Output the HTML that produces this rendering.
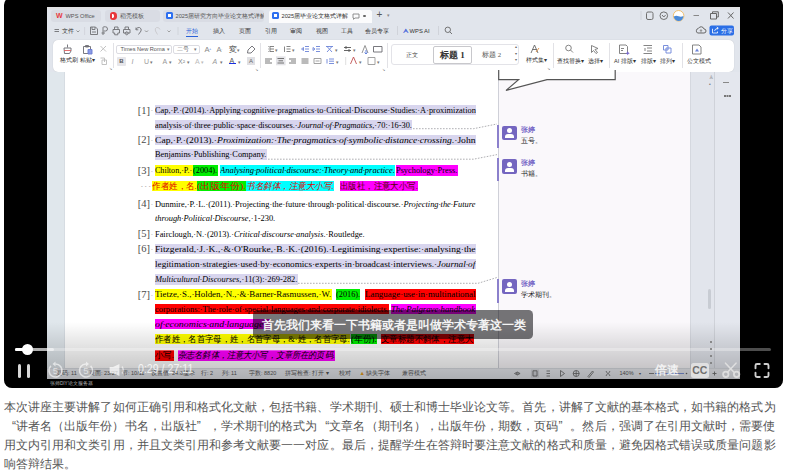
<!DOCTYPE html>
<html><head><meta charset="utf-8">
<style>
*{margin:0;padding:0;box-sizing:border-box}
html,body{width:787px;height:473px;overflow:hidden;background:#fff;font-family:"Liberation Sans",sans-serif}
.a{position:absolute}
#player{left:3.5px;top:-3px;width:779.5px;height:390.5px;background:#000;border-radius:8px;overflow:hidden}
#win{left:47px;top:6.5px;width:693px;height:371.5px;background:#e1e5ec;overflow:hidden}
.tab{height:12px;top:9.5px;border-radius:3px;background:#d9dce4;font-size:5.7px;line-height:12px;color:#555;white-space:nowrap;overflow:hidden}
.menu{top:26.5px;font-size:5.8px;line-height:9px;color:#333;white-space:nowrap}
#ribbon{left:53px;top:39.5px;width:681px;height:32px;background:#fff;border-radius:5px;box-shadow:0 0 1px rgba(0,0,0,.2)}
.rl{position:absolute;font-size:5.5px;color:#333;white-space:nowrap;line-height:7px}
.ri{position:absolute;font-size:8px;color:#555;white-space:nowrap;line-height:9px}
.sep{position:absolute;width:1px;background:#e2e2e6}
.doc{font-family:"Liberation Serif",serif;color:#111;white-space:nowrap;line-height:10.4px;height:10.4px}
.s{display:inline-block;height:10.4px;line-height:10.4px;overflow:hidden;vertical-align:top;font-weight:normal}
.f{display:inline-block;transform-origin:0 50%}
.lav{background:#d8d5ee}
.yel{background:#ffff00}
.grn{background:#00ee00}
.cyn{background:#00ffff}
.mag{background:#ff00ff}
.red{background:#ff0000}
.num{left:137.8px;font-family:"Liberation Serif",serif;font-size:10.5px;color:#4a4a4a;line-height:11px;white-space:nowrap}
.cap{left:4px;width:785px;font-size:12px;line-height:19px;height:19px;color:#555;letter-spacing:.056px;white-space:nowrap}
.q{display:inline-block;width:12px}
.cm-bar{position:absolute;left:497px;width:2px;background:#8b80cc}
.cm-av{position:absolute;left:502px;width:15px;height:14.5px;background:#7466c0;border-radius:2px;overflow:hidden}
.cm-av:before{content:"";position:absolute;left:5px;top:2.5px;width:5px;height:5px;border-radius:50%;background:#fff}
.cm-av:after{content:"";position:absolute;left:3px;top:8.5px;width:9px;height:4px;border-radius:3px 3px 0 0;background:#fff}
.cm-n{position:absolute;left:521px;font-size:7.2px;font-weight:bold;line-height:8px;color:#7a6cc8;white-space:nowrap}
.cm-t{position:absolute;left:521px;font-size:7px;line-height:8px;color:#222;white-space:nowrap}
.st{top:369px;font-size:5.5px;line-height:9px;color:#555;white-space:nowrap}

</style></head><body>
<div id="player" class="a"></div>
<div id="win" class="a"></div>
<div class="a" style="left:47px;top:6.5px;width:693px;height:2.5px;background:#e3e3e5"></div>

<!-- tabs -->
<div class="a tab" style="left:50.5px;width:50.5px;padding-left:15px"><span style="color:#e8383d;font-weight:bold;position:absolute;left:5.5px;top:.5px;font-size:7px">W</span>WPS Office</div>
<div class="a tab" style="left:104.5px;width:55px;padding-left:15px"><span style="position:absolute;left:5px;top:2.5px;width:7px;height:7.5px;border-radius:3px 50% 50% 3px;background:#e8383d"></span><span style="position:absolute;left:7px;top:4.5px;width:2.5px;height:3.5px;border-radius:0 50% 50% 0;background:#fff"></span>稻壳模板</div>
<div class="a tab" style="left:162.5px;width:101.5px;padding-left:13px"><span style="position:absolute;left:3.5px;top:2.5px;width:7px;height:7px;border-radius:1.5px;background:#2d6ff0"></span><span style="position:absolute;left:5.5px;top:4.5px;width:3px;height:2.5px;background:#fff"></span>2025届研究方向毕业论文格式详解</div>
<div class="a tab" style="left:268.5px;width:103.5px;height:13px;padding-left:13px;background:#fbfbfc;color:#333;border-radius:3px 3px 0 0"><span style="position:absolute;left:3.5px;top:2.5px;width:7px;height:7px;border-radius:1.5px;background:#2d6ff0"></span><span style="position:absolute;left:5.5px;top:4.5px;width:3px;height:2.5px;background:#fff"></span>2025届毕业论文格式详解（<span style="position:absolute;left:81px;top:0;width:22px;height:12px;background:#fbfbfc"></span><svg style="position:absolute;left:83.5px;top:3px" width="8" height="7"><path d="M1 1 H7 V5 H3 L1.5 6.3 V5 H1Z" fill="none" stroke="#777" stroke-width=".8"/></svg><span style="position:absolute;left:94.5px;top:5px;width:2.5px;height:2.5px;border-radius:50%;background:#666"></span></div>
<div class="a" style="left:376.5px;top:9px;font-size:10px;line-height:12px;color:#555">+</div><div class="a" style="left:386.5px;top:11px;font-size:5px;line-height:9px;color:#888">▾</div>

<!-- window controls -->
<svg class="a" style="left:636px;top:7px" width="104" height="33" viewBox="636 7 104 33">
<path d="M641 11 V20" stroke="#cfd2da" stroke-width="1"/>
<g fill="none" stroke="#707070" stroke-width="1">
<rect x="646.5" y="12" width="6.5" height="7.5" rx="1.5"/>
<circle cx="663.8" cy="15.7" r="3.8"/>
<path d="M662 15 L663.8 17 L665.6 15"/>
<path d="M693.5 15.5 H699" stroke="#888"/>
<path d="M710.5 13.5 H716.5 V19 H710.5 Z M712.5 13.5 V11.8 H718.3 V17 H716.5" stroke="#666"/>
<path d="M728 12.5 L733.5 18.5 M733.5 12.5 L728 18.5" stroke="#666"/>
<path d="M697.5 33 A2.6 2.6 0 0 1 698.5 28.3 A3 3 0 0 1 704 29 A2 2 0 0 1 704 33 Z" stroke="#666"/>
<path d="M701 32.5 V29.8 M700 30.8 L701 29.7 L702 30.8" stroke="#666" stroke-width=".7"/>
</g>
<circle cx="678.6" cy="15.8" r="5.3" fill="#fff" stroke="#f0c070" stroke-width="1"/>
<path d="M673.8 16.5 Q676 15 678.6 16.2 Q681 17.2 683.4 16 A4.8 4.8 0 0 1 673.8 16.5Z" fill="#4a8ad8"/>
<rect x="709.5" y="25.5" width="24.5" height="10" rx="2" fill="#2b6fe6"/>
<path d="M713 29 H712.5 V33 H717.5 V31.5 M714.5 31 Q715 28.5 718 28.2 M716.8 27 L718.3 28.2 L716.8 29.4" fill="none" stroke="#fff" stroke-width=".8"/>
</svg>
<div class="a" style="left:720.5px;top:26.5px;font-size:6px;line-height:8px;color:#fff;white-space:nowrap">分享</div>
<!-- menu row -->
<svg class="a" style="left:48px;top:22px" width="140" height="18" viewBox="48 22 140 18">
<g fill="none" stroke="#6f6f74" stroke-width=".9" stroke-linejoin="round">
<path d="M54.5 29.5 H59 M54.5 31.5 H59" />
<path d="M76.5 30.5 L78 32 L79.5 30.5" stroke="#888"/>
<path d="M84.6 27 V35" stroke="#d0d3da"/>
<path d="M90.5 27 H95.5 L97.5 29 V34.5 H90.5Z M92 27 V29.5 H95 V27 M92 32 H96" />
<path d="M103 35 V27.5 Q103 26.8 104 26.8 H105.5 Q107.5 26.8 107.5 29 Q107.5 31 105.5 31 H103.5 M101.5 33 H105"/>
<path d="M113 29.5 H119.5 V33 H117.8 V34.8 H114.7 V33 H113Z M114.5 29.5 V27 H118 V29.5"/>
<path d="M123.5 29.5 H130 V33 H123.5Z M125 29.5 V27 H128.5 V29.5 M126.7 34.8 A1.5 1.5 0 1 1 126.71 34.8"/>
<path d="M136 29.5 Q137 27 139.5 27.5 Q142 28.5 141 31 L138.5 34.5 M136 27.5 V29.8 H138.3"/>
<path d="M145 30.5 L146.5 32 L148 30.5" stroke="#888"/>
<path d="M160 29.5 Q159 27 156.5 27.5 Q154.5 28.5 155.5 31 L157.5 34.5" stroke="#c8c8cc"/>
<path d="M167.5 30.5 L169 32 L170.5 30.5" stroke="#999"/>
<path d="M178 27 V35" stroke="#d0d3da"/>
</g>
</svg>
<div class="a menu" style="left:61.5px">文件</div>
<div class="a menu" style="left:186.2px;color:#2a62d8">开始</div>
<div class="a" style="left:186px;top:35.5px;width:11.5px;height:1.3px;background:#2a62d8"></div>
<div class="a menu" style="left:212.5px">插入</div>
<div class="a menu" style="left:239px">页面</div>
<div class="a menu" style="left:264.5px">引用</div>
<div class="a menu" style="left:290px">审阅</div>
<div class="a menu" style="left:315.5px">视图</div>
<div class="a menu" style="left:341.3px">工具</div>
<div class="a menu" style="left:365.2px">会员专享</div>
<div class="sep" style="left:397px;top:26px;height:9px;background:#d0d3da"></div>
<div class="a menu" style="left:403px"><span style="color:#3a5bd9;font-weight:bold">ᗅ</span> WPS AI</div>
<div class="sep" style="left:438px;top:26px;height:9px;background:#d0d3da"></div>
<svg class="a" style="left:444px;top:26px" width="9" height="9"><circle cx="3.8" cy="3.8" r="2.7" fill="none" stroke="#666" stroke-width=".9"/><path d="M5.8 5.8 L8 8" stroke="#666" stroke-width=".9"/></svg>

<!-- ribbon -->
<div id="ribbon" class="a"></div>
<svg class="a" style="left:53px;top:39px" width="681" height="33" viewBox="53 39 681 33">
<g fill="none" stroke="#6a6a70" stroke-width="0.9" stroke-linejoin="round">
<!-- format brush -->
<path d="M67.5 44.5 V47.5 M64 48 H71 V51 L69.5 53.5 H64.5 Z"/>
<path d="M64 50.5 H71" stroke="#e06060"/>
<!-- paste -->
<path d="M83.5 46.5 H90.5 V53.5 H83.5 Z M85.5 45.5 H88.5 V47 H85.5Z"/>
<rect x="88" y="49.5" width="4" height="4.5" fill="#8a9be6" stroke="#6a7bd0"/>
<!-- cut -->
<path d="M100.5 46 L106 51.5 M106 46 L100.5 51.5" stroke="#bbb"/>
<!-- copy -->
<path d="M100.5 58 H104.5 V62 M102 60 H106.5 V64.5 H102Z" stroke="#bbb"/>
<!-- font inc/dec, eraser -->
<path d="M248 50 L252 46 L255 49 L251 53 H247.5Z" />
<!-- bullets -->
<path d="M268 46.5 H268.6 M268 49 H268.6 M268 51.5 H268.6 M270 46.5 H274 M270 49 H274 M270 51.5 H274 M270 46 V52" stroke="#777"/>
<path d="M284.5 46.5 V52 M286.5 46.5 H290.5 M286.5 49 H290.5 M286.5 51.5 H290.5" stroke="#777"/>
<path d="M301.5 49 L303.5 47.5 V50.5Z M305 46.5 H309 M305 49 H309 M305 51.5 H309" stroke="#6b83d8"/>
<path d="M313 47.5 L315 49 L313 50.5Z M316 46.5 H320 M316 49 H320 M316 51.5 H320" stroke="#6b83d8"/>
<path d="M326 46.5 H333 M327 52 L332 46.5 M332 52 L327 46.5" stroke="#6b83d8"/>
<path d="M344 47.5 H351 M344 50.5 H351 M346 46 V49 M349 49 V52" stroke="#555"/>
<path d="M362 53 L365 45.5 L368 53" stroke="#888"/>
<path d="M366 50 V54 M364.5 52.5 L366 54 L367.5 52.5" stroke="#5a7ad8"/>
<path d="M373.5 46.5 H382 V52 H373.5 Z"/>
<!-- align row -->
<rect x="276" y="56.3" width="9.6" height="9" fill="#e4e4e8" stroke="none"/>
<path d="M265 59 H272 M265 61 H270 M265 63 H272" stroke="#666"/>
<path d="M277.5 58.5 H284 M278.5 60.8 H283 M277.5 63 H284" stroke="#666"/>
<path d="M289 59 H296 M291 61 H296 M289 63 H296" stroke="#666"/>
<path d="M301.5 59 H308.5 M301.5 61 H308.5 M301.5 63 H308.5" stroke="#666"/>
<path d="M314 58.5 H321 V63.5 H314Z M315.5 61 H319.5" stroke="#999"/>
<path d="M327 59 V63.5 M329 59 H334 M329 61.2 H334 M329 63.5 H334" stroke="#6b83d8"/>
<path d="M345.7 57 V65" stroke="#ddd"/>
<path d="M350.5 64 L353.5 57 L356.5 64" stroke="#c05050"/>
<path d="M368 57.5 H375 V64.5 H368Z" stroke="#999"/>
<!-- styles set -->
<path d="M531 53 L534.5 45 L538 53 M532.5 49.5 H536.5" stroke="#666"/>
<path d="M536 52 L539 48" stroke="#e08a3a"/>
<!-- find -->
<circle cx="568.5" cy="48" r="2.8" stroke="#777"/><path d="M570.5 50 L573 52.5" stroke="#777"/>
<!-- select -->
<path d="M591.5 45.5 L598 48.5 L595 49.5 L597.5 52.5 L596 53.5 L593.5 50.5 L591.5 52.5Z" stroke="#777"/>
<!-- AI layout -->
<path d="M619.5 45 H626 L627.5 46.5 V53.5 H619.5Z M621 48.5 H624 M621 50.5 H623" stroke="#777"/>
<path d="M627 52.5 L627.7 51 L628.4 52.5 L629.8 53.2 L628.4 53.9 L627.7 55.3 L627 53.9 L625.6 53.2Z" fill="#7a6ad0" stroke="none"/>
<!-- layout -->
<path d="M643.5 45.5 H652 M643.5 53.5 H652 M645 48 V51 M647 48 H652 M647 51 H652" stroke="#777"/>
<!-- arrange -->
<path d="M663.5 45.5 H668 V50 H663.5Z M666 48 H671 V53 H666Z" stroke="#6b83d8"/>
<!-- official doc -->
<path d="M692.5 45 H699 L701 47 V54 H692.5Z" stroke="#777"/>
<path d="M695 51.5 L697 48.5 L699 51.5Z" fill="#6b83d8" stroke="none"/>
</g>
<g fill="#888" font-family="Liberation Sans" font-size="4">
<text x="108.5" y="70">↘</text><text x="255" y="70.5">↘</text><text x="382" y="70.5">↘</text><text x="547" y="70">↘</text>
</g>
</svg>
<div class="rl" style="left:59.5px;top:57px">格式刷</div>
<div class="rl" style="left:80px;top:57px">粘贴▾</div>
<div class="sep" style="left:112.5px;top:43px;height:25px"></div>
<div class="a" style="left:116px;top:45px;width:56px;height:8.5px;border:1px solid #dcdce2;border-radius:2px;font-size:5.6px;line-height:7px;color:#555;padding-left:3.5px;white-space:nowrap">Times New Roma<span style="position:absolute;right:1.5px;font-size:5px;color:#777">▾</span></div>
<div class="a" style="left:172.5px;top:45px;width:27px;height:8.5px;border:1px solid #dcdce2;border-radius:2px;font-size:6px;line-height:7px;color:#555;padding-left:3px;white-space:nowrap">二号<span style="position:absolute;right:1.5px;font-size:5px;color:#777">▾</span></div>
<div class="ri" style="left:204.5px;top:45px;font-size:7.5px;color:#888">A<span style="position:absolute;left:4.5px;top:-1px;font-size:4px;color:#4a6ad8">+</span></div>
<div class="ri" style="left:216.5px;top:45px;font-size:7.5px;color:#888">A<span style="position:absolute;left:4.5px;top:-1px;font-size:4px;color:#999">-</span></div>
<div class="ri" style="left:228.5px;top:45px;font-size:7.5px;color:#444">変</div><div class="ri" style="left:237px;top:45.5px;font-size:5px;color:#777">▾</div>
<div class="a" style="left:117px;top:56.5px;width:9px;height:9px;background:#e6e6ea;border-radius:1px;font-size:6px;line-height:9px;text-align:center;color:#555;font-weight:bold">B</div>
<div class="ri" style="left:131.5px;top:57px;font-size:7px;font-style:italic;color:#999">I</div>
<div class="ri" style="left:144px;top:57px;font-size:7px;color:#999">U</div><div class="ri" style="left:150px;top:57.5px;font-size:5px;color:#777">▾</div>
<div class="ri" style="left:162.5px;top:57px;font-size:7px;color:#999">A</div><div class="ri" style="left:168.5px;top:57.5px;font-size:5px;color:#777">▾</div>
<div class="ri" style="left:178px;top:57px;font-size:7px;color:#888">X²</div><div class="ri" style="left:186.5px;top:57.5px;font-size:5px;color:#777">▾</div>
<div class="ri" style="left:195px;top:57px;font-size:7px;color:#bbb">A</div><div class="ri" style="left:201px;top:57.5px;font-size:5px;color:#bbb">▾</div>
<div class="ri" style="left:212.5px;top:57px;font-size:7px;color:#999;font-style:italic">A</div><div class="ri" style="left:220px;top:57.5px;font-size:5px;color:#777">▾</div>
<div class="ri" style="left:229.5px;top:56px;font-size:7px;color:#555">A</div><div class="a" style="left:229px;top:62.5px;width:7px;height:1.8px;background:#1a2fe0"></div><div class="ri" style="left:238px;top:57.5px;font-size:5px;color:#777">▾</div>
<div class="a" style="left:247px;top:57px;width:8px;height:8px;background:#e0e0e4;font-size:6px;line-height:8px;text-align:center;color:#666">A</div>
<div class="sep" style="left:259.5px;top:43px;height:25px"></div>
<div class="ri" style="left:274.5px;top:46px;font-size:5px;color:#777">▾</div>
<div class="ri" style="left:291.5px;top:46px;font-size:5px;color:#777">▾</div>
<div class="ri" style="left:335px;top:46px;font-size:5px;color:#777">▾</div>
<div class="ri" style="left:352.5px;top:46px;font-size:5px;color:#777">▾</div>
<div class="ri" style="left:336px;top:58px;font-size:5px;color:#777">▾</div>
<div class="ri" style="left:359px;top:58px;font-size:5px;color:#777">▾</div>
<div class="ri" style="left:377px;top:58px;font-size:5px;color:#777">▾</div>
<div class="sep" style="left:386.5px;top:43px;height:25px"></div>
<div class="a" style="left:390.5px;top:44px;width:128.5px;height:21px;border:1px solid #e3e3e8;border-radius:3px"></div>
<div class="rl" style="left:406px;top:51.5px;font-size:5.8px;color:#444">正文</div>
<div class="a" style="left:433px;top:45.5px;width:38.8px;height:18px;border:1px solid #c8c8cc;border-radius:2px;font-family:'Liberation Serif',serif;font-size:9px;line-height:16px;text-align:center;color:#333;white-space:nowrap;font-weight:bold">标题 1</div>
<div class="rl" style="left:482px;top:51px;font-size:6.8px;color:#555;font-family:'Liberation Serif',serif">标题 2</div>
<div class="rl" style="left:514.5px;top:44px;font-size:4px;line-height:6.5px;color:#666">▴<br>▾<br>▾</div>
<div class="rl" style="left:525.5px;top:57px">样式集▾</div>
<div class="sep" style="left:552.5px;top:43px;height:25px"></div>
<div class="rl" style="left:557px;top:57.5px">查找替换▾</div>
<div class="rl" style="left:587.5px;top:57.5px">选择▾</div>
<div class="sep" style="left:608.5px;top:43px;height:25px"></div>
<div class="rl" style="left:614px;top:57.5px">AI 排版▾</div>
<div class="rl" style="left:640.5px;top:57.5px">排版▾</div>
<div class="rl" style="left:660px;top:57.5px">排列▾</div>
<div class="sep" style="left:681.5px;top:43px;height:25px"></div>
<div class="rl" style="left:686.5px;top:57.5px">公文模式</div>

<!-- doc area -->
<div class="a" style="left:47px;top:71.5px;width:18px;height:297px;background:#e0e7ec;border-right:1.5px solid #d6dce2"></div>
<div class="a" style="left:65px;top:71.5px;width:433px;height:297px;background:#fff"></div>
<div class="a" style="left:498px;top:71.5px;width:192px;height:297px;background:#faf8fb;border-left:1px solid #cfd0d8"></div>
<div class="a" style="left:690px;top:71.5px;width:24px;height:297px;background:#e2e5ec;border-left:1px solid #d5d8df"></div>
<div class="a" style="left:714px;top:71.5px;width:26px;height:297px;background:#e4e7ee;border-left:1px solid #cfd2d9"></div>
<div class="a" style="left:723px;top:82px;width:6px;height:1px;background:#888"></div>
<div class="a" style="left:724px;top:95px;width:1.5px;height:1.5px;background:#777;box-shadow:2.5px 0 #777,5px 0 #777"></div>
<div class="a" style="left:709px;top:73.5px;font-size:5px;color:#777;line-height:7px">♙<br>•</div>
<div class="a" style="left:708px;top:289px;width:3px;height:20px;background:#c8ccd3;border-radius:2px"></div>

<!-- comment bubble -->
<svg class="a" style="left:490px;top:60px" width="140" height="40" viewBox="490 60 140 40">
<path d="M498.7 70 V79.6 H518.6 L506 90.4 L547 79.6 H615.2 V70" fill="#fff" stroke="#555" stroke-width="1.2"/>
</svg>
<!-- dotted connectors -->
<svg class="a" style="left:260px;top:110px" width="240" height="190" viewBox="260 110 240 190">
<g fill="none" stroke="#9a9aa0" stroke-width=".8" stroke-dasharray="1.6 1.4">
<path d="M413 128.7 H473.5 L497 124"/>
<path d="M268 159.2 H473.5 L497 154.6"/>
<path d="M298 283.3 H478 L497 277.5"/>
</g>
</svg>
<!-- comments -->
<div class="cm-bar" style="top:125px;height:23px"></div>
<div class="cm-av" style="top:125.6px"></div>
<div class="cm-n" style="top:126px">张婷</div>
<div class="cm-t" style="top:137.3px">五号。</div>
<div class="cm-bar" style="top:158.2px;height:23px"></div>
<div class="cm-av" style="top:159px"></div>
<div class="cm-n" style="top:159.3px">张婷</div>
<div class="cm-t" style="top:170.3px">书籍。</div>
<div class="cm-bar" style="top:279px;height:23.5px"></div>
<div class="cm-av" style="top:279px"></div>
<div class="cm-n" style="top:279.5px">张婷</div>
<div class="cm-t" style="top:291px">学术期刊。</div>

<!-- status bar -->
<div class="a" style="left:47px;top:368px;width:693px;height:10.5px;background:#e9ebf0;border-top:1px solid #d9dce2"></div>
<div class="a st" style="left:56px">页码: 11</div>
<div class="a st" style="left:89px">页面: 23/27</div>
<div class="a st" style="left:122px">节: 10/11</div>
<div class="a st" style="left:151px">设置值: 24.6厘米</div>
<div class="a st" style="left:201px">行: 2</div>
<div class="a st" style="left:222px">列: 11</div>
<div class="a st" style="left:249px">字数: 8820</div>
<div class="a st" style="left:285px">拼写检查: 打开 ▾</div>
<div class="a st" style="left:338.5px">校对</div>
<div class="a st" style="left:359.5px"><span style="color:#e8a020">▲</span> 缺失字体</div>
<div class="a st" style="left:401.5px">兼容模式</div>
<svg class="a" style="left:510px;top:368px" width="180" height="11" viewBox="510 368 180 11">
<g fill="none" stroke="#666" stroke-width=".8">
<path d="M514.5 373.5 Q517.3 370.5 520.1 373.5 Q517.3 376.5 514.5 373.5Z"/><circle cx="517.3" cy="373.5" r=".8"/>
<rect x="531" y="369.5" width="8" height="8" fill="#d4d6dc" stroke="none"/>
<path d="M533 370.8 H537 V376 H533Z"/>
<path d="M546.5 371 H550 M546.5 373.5 H550 M546.5 376 H550"/>
<path d="M560.5 370.5 L564.5 373.5 L560.5 376.5Z"/>
<circle cx="576.2" cy="373.5" r="3"/><path d="M573.2 373.5 H579.2 M576.2 370.5 V376.5"/>
<path d="M588 376.5 L592.5 371 L593.5 372 L589 377.5Z"/>
<path d="M606 371 L607.5 373.5 L606 376 M610 371 L608.5 373.5 L610 376"/>
<path d="M649 373.5 H654"/>
</g>
<path d="M655 373.5 H684" stroke="#7b92d8" stroke-width="1"/>
<circle cx="686.5" cy="373.5" r=".8" fill="#666"/>
</svg>
<div class="a st" style="left:619.5px">140%</div>
<div class="a st" style="left:638.5px;font-size:4px">▾</div>

<div class="a num" style="top:104.5px">[1]<span style="position:absolute;left:13px;top:1.8px;font-size:7px;color:#888">·</span></div>
<div class="a num" style="top:134.2px">[2]<span style="position:absolute;left:13px;top:1.8px;font-size:7px;color:#888">·</span></div>
<div class="a num" style="top:164.9px">[3]<span style="position:absolute;left:13px;top:1.8px;font-size:7px;color:#888">·</span></div>
<div class="a num" style="top:198.2px">[4]<span style="position:absolute;left:13px;top:1.8px;font-size:7px;color:#888">·</span></div>
<div class="a num" style="top:228.3px">[5]<span style="position:absolute;left:13px;top:1.8px;font-size:7px;color:#888">·</span></div>
<div class="a num" style="top:243.4px">[6]<span style="position:absolute;left:13px;top:1.8px;font-size:7px;color:#888">·</span></div>
<div class="a num" style="top:288.9px">[7]<span style="position:absolute;left:13px;top:1.8px;font-size:7px;color:#888">·</span></div>
<div class="a doc" style="top:104.80px;left:155px;font-size:8.8px;color:#000"><b class="s lav" style="width:321px"><span class="f" style="transform:scaleX(0.951)">Cap,·P.·(2014).·Applying·cognitive·pragmatics·to·Critical·Discourse·Studies:·A·proximization</span></b></div>
<div class="a doc" style="top:119.75px;left:155px;font-size:8.8px;color:#000"><b class="s lav" style="width:257px"><span class="f" style="transform:scaleX(0.943)">analysis·of·three·public·space·discourses.·<i>Journal·of·Pragmatics</i>,·70:·16-30.</span></b></div>
<div class="a doc" style="top:134.55px;left:155px;font-size:8.8px;color:#000"><b class="s lav" style="width:321px"><span class="f" style="transform:scaleX(1.09)">Cap,·P.·(2013).·<i>Proximization:·The·pragmatics·of·symbolic·distance·crossing</i>.·John</span></b></div>
<div class="a doc" style="top:149.35px;left:155px;font-size:8.8px;color:#000"><b class="s lav" style="width:112px"><span class="f" style="transform:scaleX(0.953)">Benjamins·Publishing·Company.</span></b></div>
<div class="a doc" style="top:165.25px;left:155px;font-size:8.8px;color:#000"><b class="s yel" style="width:38px"><span class="f" style="transform:scaleX(0.915)">Chilton,·P.·</span></b><b class="s grn" style="width:25px"><span class="f" style="transform:scaleX(0.942)">(2004).</span></b><b class="s " style="width:1.5px"><span class="f"></span></b><b class="s cyn" style="width:175px"><span class="f" style="transform:scaleX(0.964)"><i>Analysing·political·discourse:·Theory·and·practice.</i></span></b><b class="s " style="width:1.5px"><span class="f"></span></b><b class="s mag" style="width:62px"><span class="f" style="transform:scaleX(0.946)">Psychology·Press.</span></b></div>
<div class="a doc" style="top:181.10px;left:140px;font-size:9px;color:#e00000"><b class="s " style="width:11.6px"><span class="f" style="transform:scaleX(1.278)"><span style="color:#aaa">···</span></span></b><b class="s yel" style="width:45.4px"><span class="f" style="transform:scaleX(0.947)">作者姓，名.</span></b><b class="s grn" style="width:48.6px"><span class="f" style="transform:scaleX(1.102)">(出版年份).</span></b><b class="s cyn" style="width:88.4px"><span class="f" style="transform:scaleX(0.951)"><i>书名斜体，注意大小写.</i></span></b><b class="s " style="width:5.6px"><span class="f"></span></b><b class="s mag" style="width:78.4px"><span class="f" style="transform:scaleX(0.934)"><span style="color:#500">出版社，注意大小写.</span></span></b></div>
<div class="a doc" style="top:198.50px;left:155px;font-size:8.8px;color:#000"><b class="s " style="width:321px"><span class="f" style="transform:scaleX(0.951)">Dunmire,·P.·L.·(2011).·Projecting·the·future·through·political·discourse.·<i>Projecting·the·Future</i></span></b></div>
<div class="a doc" style="top:212.80px;left:155px;font-size:8.8px;color:#000"><b class="s " style="width:121px"><span class="f" style="transform:scaleX(0.956)"><i>through·Political·Discourse</i>,·1-230.</span></b></div>
<div class="a doc" style="top:228.60px;left:155px;font-size:8.8px;color:#000"><b class="s " style="width:210px"><span class="f" style="transform:scaleX(0.948)">Fairclough,·N.·(2013).·<i>Critical·discourse·analysis</i>.·Routledge.</span></b></div>
<div class="a doc" style="top:243.70px;left:155px;font-size:8.8px;color:#000"><b class="s lav" style="width:321px"><span class="f" style="transform:scaleX(1.086)">Fitzgerald,·J.·K.,·&amp;·O'Rourke,·B.·K.·(2016).·Legitimising·expertise:·analysing·the</span></b></div>
<div class="a doc" style="top:259.10px;left:155px;font-size:8.8px;color:#000"><b class="s lav" style="width:321px"><span class="f" style="transform:scaleX(1.047)">legitimation·strategies·used·by·economics·experts·in·broadcast·interviews.·<i>Journal·of</i></span></b></div>
<div class="a doc" style="top:274.30px;left:155px;font-size:8.8px;color:#000"><b class="s lav" style="width:143px"><span class="f" style="transform:scaleX(0.956)"><i>Multicultural·Discourses</i>,·11(3):·269-282.</span></b></div>
<div class="a doc" style="top:289.20px;left:155px;font-size:8.8px;color:#000"><b class="s yel" style="width:177px"><span class="f" style="transform:scaleX(1.009)">Tietze,·S.,·Holden,·N.,·&amp;·Barner-Rasmussen,·W.</span></b><b class="s " style="width:3.6px"><span class="f"></span></b><b class="s grn" style="width:24.6px"><span class="f" style="transform:scaleX(0.942)">(2016).</span></b><b class="s " style="width:4.6px"><span class="f"></span></b><b class="s red" style="width:111px"><span class="f" style="transform:scaleX(1.014)">Language·use·in·multinational</span></b></div>
<div class="a doc" style="top:304.10px;left:155px;font-size:8.8px;color:#000"><b class="s red" style="width:234px"><span class="f" style="transform:scaleX(0.965)">corporations:·The·role·of·special·languages·and·corporate·idiolects.</span></b><b class="s " style="width:2px"><span class="f"></span></b><b class="s mag" style="width:85px"><span class="f" style="transform:scaleX(0.994)"><i>The·Palgrave·handbook</i></span></b></div>
<div class="a doc" style="top:318.70px;left:155px;font-size:8.8px;color:#000"><b class="s mag" style="width:115px"><span class="f" style="transform:scaleX(1.123)"><i>of·economics·and·language</i>,·</span></b></div>
<div class="a doc" style="top:333.80px;left:155px;font-size:9px;color:#000"><b class="s yel" style="width:194.6px"><span class="f" style="transform:scaleX(0.926)">作者姓，名首字母，姓，名首字母，&amp;·姓，名首字母.</span></b><b class="s " style="width:1.2px"><span class="f"></span></b><b class="s grn" style="width:26px"><span class="f" style="transform:scaleX(0.981)">(年份).</span></b><b class="s " style="width:4px"><span class="f"></span></b><b class="s red" style="width:93px"><span class="f" style="transform:scaleX(0.934)">文章标题不斜体，注意大</span></b></div>
<div class="a doc" style="top:350.40px;left:155px;font-size:9px;color:#000"><b class="s red" style="width:19px"><span class="f" style="transform:scaleX(0.925)">小写.</span></b><b class="s " style="width:4px"><span class="f"></span></b><b class="s mag" style="width:157px"><span class="f" style="transform:scaleX(0.905)"><i>杂志名斜体，注意大小写，文章所在的页码.</i></span></b></div>

<!-- bottom gradient overlay -->
<div class="a" style="left:3.5px;top:322px;width:779.5px;height:65.5px;background:linear-gradient(rgba(0,0,0,0),rgba(0,0,0,.08) 25%,rgba(0,0,0,.22) 75%,rgba(0,0,0,.3));border-radius:0 0 8px 8px"></div>
<div class="a" style="left:50px;top:380.5px;font-size:4.6px;line-height:6px;color:#b5b5b5;white-space:nowrap">张师DIY论文服务器</div>

<!-- subtitle -->
<div class="a" style="left:253px;top:310.3px;width:280px;height:28.5px;background:rgba(2,2,6,.54);border-radius:4.5px;color:#f4f4f4;font-weight:bold;font-size:12px;line-height:28.5px;text-align:center;padding-left:1.5px;padding-top:.8px;white-space:nowrap">首先我们来看一下书籍或者是叫做学术专著这一类</div>

<!-- progress -->
<div class="a" style="left:15px;top:347.8px;width:756px;height:3.4px;background:rgba(255,255,255,.3);border-radius:2px"></div>
<div class="a" style="left:15px;top:347.8px;width:38.5px;height:3.4px;background:rgba(255,255,255,.55);border-radius:2px"></div>
<div class="a" style="left:15px;top:347.8px;width:12px;height:3.4px;background:#fff;border-radius:2px"></div>
<div class="a" style="left:21.5px;top:344px;width:11px;height:11px;background:#fff;border-radius:50%"></div>
<!-- controls -->
<div class="a" style="left:18px;top:364.3px;width:3px;height:13.4px;background:#d8d8d8;border-radius:1.5px"></div>
<div class="a" style="left:27px;top:364.3px;width:3px;height:13.4px;background:#d8d8d8;border-radius:1.5px"></div>
<svg class="a" style="left:44px;top:360px" width="90" height="20" viewBox="44 360 90 20">
<g fill="none" stroke="rgba(255,255,255,.6)" stroke-width="1.5">
<path d="M55.5 364 A6.5 6.5 0 1 1 50.9 365.9"/>
<path d="M86 364 A6.5 6.5 0 1 0 90.6 365.9"/>
</g>
<g fill="rgba(255,255,255,.6)">
<path d="M55.5 361.5 L52.5 364 L55.5 366.5Z"/>
<path d="M86 361.5 L89 364 L86 366.5Z"/>
<text x="55.5" y="374" font-size="9.5" text-anchor="middle" font-family="Liberation Sans">5</text>
<text x="86" y="374" font-size="9.5" text-anchor="middle" font-family="Liberation Sans">5</text>
</g>
<g fill="rgba(255,255,255,.7)">
<path d="M109.6 367 H113 L119.4 364 V376 L113 373 H109.6Z"/>
</g>
<path d="M122 366.5 Q124.5 370 122 373.5" fill="none" stroke="rgba(255,255,255,.6)" stroke-width="1.3"/>
</svg>
<div class="a" style="left:138px;top:362px;font-size:12px;line-height:14px;color:rgba(255,255,255,.8);white-space:nowrap;transform:scaleX(.885);transform-origin:0 0">0:29 / 27:11</div>
<div class="a" style="left:655px;top:363px;font-size:12px;line-height:14px;color:rgba(255,255,255,.8);white-space:nowrap;font-weight:bold">倍速</div>
<div class="a" style="left:690.5px;top:363.2px;width:18.5px;height:14.5px;background:rgba(228,228,228,.9);border-radius:2.5px;font-size:10.5px;line-height:14.5px;text-align:center;font-weight:bold;color:#707070">CC</div>
<svg class="a" style="left:718px;top:358px" width="56" height="24" viewBox="718 358 56 24">
<g fill="none" stroke="rgba(225,225,225,.92)" stroke-width="1.6" stroke-linecap="round">
<path d="M725.5 363.2 L733.5 371.8"/><path d="M736 363.2 L728 371.8"/>
<circle cx="725.8" cy="374.3" r="2.7" stroke-width="1.8"/><circle cx="736.6" cy="374.3" r="2.7" stroke-width="1.8"/>
</g>
<g fill="none" stroke="rgba(225,225,225,.92)" stroke-width="1.9" stroke-linecap="round" stroke-linejoin="round">
<path d="M755.5 368.3 V365.5 Q755.5 364 757 364 H759.8"/>
<path d="M764.5 364 H767 Q768.5 364 768.5 365.5 V368.3"/>
<path d="M768.5 372.7 V375.5 Q768.5 377 767 377 H764.5"/>
<path d="M759.8 377 H757 Q755.5 377 755.5 375.5 V372.7"/>
</g>
</svg>
<div class="a" style="left:710px;top:341px;width:1.6px;height:1.6px;border-radius:50%;background:#7a7a7a;box-shadow:0 7px #7a7a7a,0 14px #7a7a7a,0 21px #7a7a7a"></div>
<svg class="a" style="left:712px;top:371px" width="5" height="5"><path d="M0.5 2.5 H4.5 M2.5 0.5 V4.5" stroke="#555" stroke-width=".9"/></svg>

<!-- caption -->
<div class="a cap" style="top:397.9px">本次讲座主要讲解了如何正确引用和格式化文献，包括书籍、学术期刊、硕士和博士毕业论文等。首先，讲解了文献的基本格式，如书籍的格式为</div>
<div class="a cap" style="top:416.9px"><span class="q" style="text-align:right">“</span>讲者名（出版年份）书名，出版社<span class="q">”</span>，学术期刊的格式为<span class="q" style="text-align:right">“</span>文章名（期刊名），出版年份，期数，页码<span class="q">”</span>。然后，强调了在引用文献时，需要使</div>
<div class="a cap" style="top:435.9px">用文内引用和文类引用，并且文类引用和参考文献要一一对应。最后，提醒学生在答辩时要注意文献的格式和质量，避免因格式错误或质量问题影</div>
<div class="a cap" style="top:454.9px">响答辩结果。</div>



</body></html>
